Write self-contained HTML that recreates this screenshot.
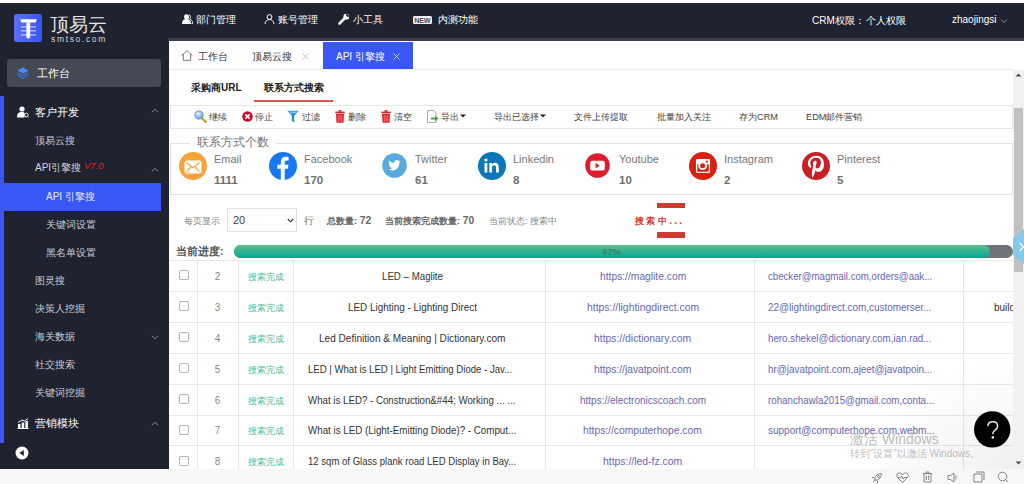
<!DOCTYPE html>
<html><head><meta charset="utf-8">
<style>
*{box-sizing:border-box;margin:0;padding:0}
html,body{width:1024px;height:484px;overflow:hidden;background:#f7f7f7;font-family:"Liberation Sans",sans-serif;}
.a{position:absolute;white-space:nowrap}
#topstrip{left:0;top:0;width:1024px;height:3px;background:#fff}
#header{left:0;top:3px;width:1024px;height:38px;background:#1f2330}
#sidebar{left:0;top:3px;width:169px;height:466px;background:#1f2330}
#band{left:168px;top:38px;width:856px;height:3px;background:#3a3e4a}
#content{left:169px;top:41px;width:855px;height:428px;background:#fff}
.hnav{color:#fff;font-size:10px;line-height:12px}
.side{color:#c9ccd4;font-size:10px;line-height:12px}
.sideh{color:#fff;font-size:11px;line-height:14px}
.hl{border-top:1px solid #e6e6e6}
.vl{border-left:1px solid #e6e6e6}
.tb{font-size:9.2px;color:#444;line-height:12px}
.soc{font-size:11px;color:#777;line-height:13px}
.socn{font-size:11.5px;color:#707070;font-weight:bold;line-height:13px}
.cell{font-size:10px;color:#333;line-height:12px;transform-origin:0 0}
.url{font-size:10px;color:#6a66b8;line-height:12px;transform-origin:0 0}
.ok{font-size:9.3px;color:#4cbb9c;line-height:12px}
.num{font-size:10px;color:#888;line-height:12px}
.cb{width:9.5px;height:9.5px;border:1px solid #b4b4b4;border-radius:2px;background:#fff}
</style></head><body>
<div id="topstrip" class="a"></div>
<div id="header" class="a"></div>
<div id="sidebar" class="a"></div>
<div id="band" class="a"></div>
<div id="content" class="a"></div>

<!-- logo -->
<div class="a" style="left:14px;top:14px;width:28px;height:28px;border-radius:3px;background:linear-gradient(90deg,#5b6ff5,#3a55f2)"></div>
<svg class="a" style="left:14px;top:14px" width="28" height="28" viewBox="0 0 28 28">
 <path d="M6.3 5.3 H22.7 L21.8 8.6 H7.2 Z" fill="#fff"/>
 <path d="M12.4 8.5 H16.2 V23.5 L14.3 24.8 L12.4 23.5Z" fill="#fff"/>
 <g fill="#fff" opacity="0.75"><rect x="7" y="12.3" width="15" height="1.1"/><rect x="7" y="16.3" width="15" height="1.1"/><rect x="7" y="20.4" width="15" height="1.1"/></g>
</svg>
<div class="a" style="left:50px;top:13.5px;color:#e4e4e6;font-size:18.7px;line-height:22px;font-weight:300">顶易云</div>
<div class="a" style="left:51px;top:34.5px;color:#d8d8dc;font-size:8.5px;line-height:9px;letter-spacing:1.65px">smtso.com</div>

<!-- header nav -->
<svg class="a" style="left:182px;top:14px" width="11" height="10" viewBox="0 0 11 10"><circle cx="4.5" cy="2.8" r="2.5" fill="#fff"/><path d="M0 10 C0 6 2 5 4.5 5 C7 5 9 6 9 10Z" fill="#fff"/><path d="M7 0.8 C8.8 1 9 4 7.5 5 C9.5 5.5 10.5 7 10.8 9.5 L9.5 9.5" fill="none" stroke="#fff" stroke-width="0.9"/></svg>
<div class="a hnav" style="left:196px;top:14px">部门管理</div>
<svg class="a" style="left:264px;top:14px" width="11" height="10" viewBox="0 0 11 10"><circle cx="5.5" cy="3" r="2.4" fill="none" stroke="#fff" stroke-width="1"/><path d="M1 10 C1.5 6.5 3.5 5.6 5.5 5.6 C7.5 5.6 9.5 6.5 10 10" fill="none" stroke="#fff" stroke-width="1"/></svg>
<div class="a hnav" style="left:278px;top:14px">账号管理</div>
<svg class="a" style="left:338px;top:13px" width="12" height="12" viewBox="0 0 12 12"><path d="M1.5 10.5 L6.5 5.5" stroke="#fff" stroke-width="2.6" stroke-linecap="round"/><circle cx="8.3" cy="3.7" r="2.9" fill="#fff"/><path d="M8.8 0.6 L11.4 3.2 L9.8 4.2 L7.8 2.2Z" fill="#1f2330"/></svg>
<div class="a hnav" style="left:353px;top:14px">小工具</div>
<div class="a" style="left:413px;top:16px;width:18.5px;height:8px;background:#f2f2f2;border-radius:1.5px;color:#4a4d58;font-size:7.2px;font-weight:bold;line-height:9px;text-align:center;letter-spacing:-0.3px">NEW</div>
<div class="a hnav" style="left:438px;top:14px">内测功能</div>
<div class="a hnav" style="left:812px;top:15px;font-size:10px">CRM权限：</div>
<div class="a hnav" style="left:866px;top:15px;font-size:10px">个人权限</div>
<div class="a hnav" style="left:952px;top:14px;font-size:10px">zhaojingsi</div>
<svg class="a" style="left:1000px;top:18px" width="8" height="6" viewBox="0 0 8 6"><path d="M1 1.5 L4 4.5 L7 1.5" fill="none" stroke="#9a9ca4" stroke-width="0.9"/></svg>

<!-- sidebar -->
<div class="a" style="left:7px;top:59px;width:154px;height:28px;background:#454954;border-radius:3px"></div>
<svg class="a" style="left:16.5px;top:66.5px" width="12" height="12" viewBox="0 0 12 12"><path d="M6 0.6 L11.6 3.5 L6 6.4 L0.4 3.5Z" fill="#4a8df8"/><path d="M0.6 5.8 L6 8.6 L11.4 5.8" fill="none" stroke="#3d72e6" stroke-width="1.1"/><path d="M0.6 8.3 L6 11.1 L11.4 8.3" fill="none" stroke="#3d72e6" stroke-width="1.1"/></svg>
<div class="a sideh" style="left:37px;top:66px;font-size:11px">工作台</div>
<div class="a" style="left:0;top:96px;width:4px;height:347px;background:#3a57f5"></div>
<svg class="a" style="left:17px;top:106px" width="12" height="12" viewBox="0 0 12 12"><circle cx="5" cy="3" r="2.6" fill="#fff"/><path d="M0 11.5 C0 7 2 6 5 6 C6.5 6 7.2 6.3 7.5 6.7 L7.5 11.5Z" fill="#fff"/><circle cx="9.3" cy="9" r="1.8" fill="none" stroke="#fff" stroke-width="0.9"/><path d="M10.5 10.3 L11.8 11.6" stroke="#fff" stroke-width="0.9"/></svg>
<div class="a sideh" style="left:35px;top:105px">客户开发</div>
<svg class="a" style="left:151px;top:108px" width="8" height="5" viewBox="0 0 8 5"><path d="M1 4.2 L4 1.2 L7 4.2" fill="none" stroke="#8a8d96" stroke-width="1"/></svg>
<div class="a side" style="left:35px;top:135px">顶易云搜</div>
<div class="a side" style="left:35px;top:162px;font-size:10px;color:#d5d7dd">API引擎搜</div>
<div class="a" style="left:84px;top:161px;color:#e0202a;font-size:9.5px;font-style:italic;line-height:10px">V7.0</div>
<svg class="a" style="left:151px;top:167px" width="8" height="5" viewBox="0 0 8 5"><path d="M1 4.2 L4 1.2 L7 4.2" fill="none" stroke="#8a8d96" stroke-width="1"/></svg>
<div class="a" style="left:4px;top:183px;width:157px;height:28px;background:#3a57f5"></div>
<div class="a side" style="left:46px;top:191px;color:#e6e9ff">API 引擎搜</div>
<div class="a side" style="left:46px;top:219px">关键词设置</div>
<div class="a side" style="left:46px;top:247px">黑名单设置</div>
<div class="a side" style="left:35px;top:275px">图灵搜</div>
<div class="a side" style="left:35px;top:303px">决策人挖掘</div>
<div class="a side" style="left:35px;top:331px">海关数据</div>
<svg class="a" style="left:151px;top:335px" width="8" height="5" viewBox="0 0 8 5"><path d="M1 0.8 L4 3.8 L7 0.8" fill="none" stroke="#8a8d96" stroke-width="1"/></svg>
<div class="a side" style="left:35px;top:359px">社交搜索</div>
<div class="a side" style="left:35px;top:387px">关键词挖掘</div>
<svg class="a" style="left:17px;top:418px" width="12" height="11" viewBox="0 0 12 11"><path d="M0.5 10.5 H11.5" stroke="#fff" stroke-width="1"/><rect x="1" y="6" width="2.5" height="4.5" fill="#fff"/><rect x="4.7" y="4.5" width="2.5" height="6" fill="#fff"/><rect x="8.4" y="3" width="2.5" height="7.5" fill="#fff"/><path d="M1 4.5 L5 2 L7.5 3 L11 0.5" fill="none" stroke="#fff" stroke-width="1"/></svg>
<div class="a sideh" style="left:35px;top:416px">营销模块</div>
<svg class="a" style="left:151px;top:421px" width="8" height="5" viewBox="0 0 8 5"><path d="M1 4.2 L4 1.2 L7 4.2" fill="none" stroke="#8a8d96" stroke-width="1"/></svg>
<svg class="a" style="left:15px;top:446px" width="14" height="14" viewBox="0 0 14 14"><circle cx="7" cy="7" r="6.5" fill="#fff"/><path d="M4.3 7 L8.8 4 L8.8 10Z" fill="#1f2330"/></svg>


<!-- tabs -->
<svg class="a" style="left:180.5px;top:49.5px" width="12" height="11" viewBox="0 0 12 11"><path d="M0.6 5.6 L6 0.6 L11.4 5.6 M2.3 4.2 V10.3 H9.7 V4.2" fill="none" stroke="#555" stroke-width="0.8"/></svg>
<div class="a" style="left:198px;top:50.5px;font-size:10px;color:#333;line-height:12px">工作台</div>
<div class="a" style="left:252px;top:50.5px;font-size:10px;color:#333;line-height:12px">顶易云搜</div>
<svg class="a" style="left:302px;top:53px" width="7" height="7" viewBox="0 0 7 7"><path d="M0.5 0.5 L6.5 6.5 M6.5 0.5 L0.5 6.5" stroke="#b5b5b5" stroke-width="0.8"/></svg>
<div class="a" style="left:323px;top:42px;width:90px;height:27px;background:#3a57f5"></div>
<div class="a" style="left:336px;top:50.5px;font-size:10px;color:#fff;line-height:12px">API 引擎搜</div>
<svg class="a" style="left:393px;top:53px" width="7" height="7" viewBox="0 0 7 7"><path d="M0.5 0.5 L6.5 6.5 M6.5 0.5 L0.5 6.5" stroke="#dfe4ff" stroke-width="0.8"/></svg>
<div class="a hl" style="left:169px;top:69px;width:844px;height:1px;border-color:#ececec"></div>
<!-- scrollbar -->
<div class="a" style="left:1013px;top:70px;width:11px;height:399px;background:#f1f1f1"></div>
<div class="a" style="left:1014px;top:108px;width:9px;height:164px;background:#c1c1c1"></div>
<svg class="a" style="left:1014px;top:72px" width="9" height="6" viewBox="0 0 9 6"><path d="M1.5 4.5 L4.5 1.5 L7.5 4.5Z" fill="#505050"/></svg>
<svg class="a" style="left:1014px;top:460px" width="9" height="6" viewBox="0 0 9 6"><path d="M1.5 1.5 L4.5 4.5 L7.5 1.5Z" fill="#505050"/></svg>
<!-- subtabs -->
<div class="a" style="left:191px;top:81px;font-size:10px;color:#222;font-weight:bold;line-height:13px">采购商URL</div>
<div class="a" style="left:264px;top:81px;font-size:10px;color:#222;font-weight:bold;line-height:13px">联系方式搜索</div>
<div class="a" style="left:254px;top:100px;width:79px;height:1.5px;background:#e0534f"></div>
<div class="a hl" style="left:169px;top:105px;width:844px;height:1px"></div>
<!-- toolbar -->
<div class="a" style="left:170px;top:105px;width:843px;height:24px;border:1px solid #e6e6e6;border-left-color:#e6e6e6"></div>

<!-- toolbar items -->
<svg class="a" style="left:194px;top:110px" width="13" height="13" viewBox="0 0 13 13"><defs><radialGradient id="mg" cx="0.4" cy="0.35" r="0.6"><stop offset="0" stop-color="#e8f6ff"/><stop offset="1" stop-color="#58a8e8"/></radialGradient></defs><path d="M7.8 8 L11.8 12" stroke="#d89a2a" stroke-width="2.4" stroke-linecap="round"/><circle cx="5" cy="5" r="4.1" fill="url(#mg)" stroke="#8a9aa8" stroke-width="1"/></svg>
<div class="a tb" style="top:111px;left:209px">继续</div>
<svg class="a" style="left:242px;top:111px" width="11" height="11" viewBox="0 0 11 11"><circle cx="5.5" cy="5.5" r="5.3" fill="#c4122b"/><path d="M3.4 3.4 L7.6 7.6 M7.6 3.4 L3.4 7.6" stroke="#fff" stroke-width="1.6"/></svg>
<div class="a tb" style="top:111px;left:255px">停止</div>
<svg class="a" style="left:287px;top:110px" width="12" height="13" viewBox="0 0 12 13"><path d="M0.3 0.8 H11.7 L7.2 5.8 V12.5 L4.8 10.8 V5.8Z" fill="#1b8fd6"/><path d="M1.5 1.5 H10.5 L8 3.5 H4Z" fill="#7cc6f2"/></svg>
<div class="a tb" style="top:111px;left:302px">过滤</div>
<svg class="a" style="left:335px;top:110px" width="10" height="13" viewBox="0 0 10 13"><rect x="0.3" y="1.6" width="9.4" height="1.8" fill="#e0242c"/><rect x="3.5" y="0.2" width="3" height="1.6" fill="#e0242c"/><path d="M1 4 H9 L8.5 12.8 H1.5Z" fill="#e0242c"/><path d="M3.3 5.2 V11.5 M5 5.2 V11.5 M6.7 5.2 V11.5" stroke="#ff9a9a" stroke-width="0.6"/></svg>
<div class="a tb" style="top:111px;left:348px">删除</div>
<svg class="a" style="left:381px;top:110px" width="10" height="13" viewBox="0 0 10 13"><rect x="0.3" y="1.6" width="9.4" height="1.8" fill="#e0242c"/><rect x="3.5" y="0.2" width="3" height="1.6" fill="#e0242c"/><path d="M1 4 H9 L8.5 12.8 H1.5Z" fill="#e0242c"/><path d="M3.3 5.2 V11.5 M5 5.2 V11.5 M6.7 5.2 V11.5" stroke="#ff9a9a" stroke-width="0.6"/></svg>
<div class="a tb" style="top:111px;left:394px">清空</div>
<svg class="a" style="left:427px;top:110px" width="12" height="13" viewBox="0 0 12 13"><path d="M0.5 0.5 H6.5 L9 3 V12.5 H0.5Z" fill="#fff" stroke="#999" stroke-width="0.8"/><path d="M4 7.5 H8 V5.5 L11.5 8.5 L8 11.5 V9.5 H4Z" fill="#3cab3c"/></svg>
<div class="a tb" style="top:111px;left:441px">导出</div>
<svg class="a" style="left:460px;top:114px" width="6" height="4" viewBox="0 0 6 4"><path d="M0 0.5 H6 L3 3.5Z" fill="#222"/></svg>
<div class="a tb" style="top:111px;left:494px">导出已选择</div>
<svg class="a" style="left:540px;top:114px" width="6" height="4" viewBox="0 0 6 4"><path d="M0 0.5 H6 L3 3.5Z" fill="#222"/></svg>
<div class="a tb" style="top:111px;left:574px">文件上传提取</div>
<div class="a tb" style="top:111px;left:656.5px">批量加入关注</div>
<div class="a tb" style="top:111px;left:739px">存为CRM</div>
<div class="a tb" style="top:111px;left:806px">EDM邮件营销</div>

<!-- fieldset -->
<div class="a" style="left:170px;top:143px;width:843px;height:52px;border:1px solid #e2e2e2;border-top:none"></div>
<div class="a" style="left:170px;top:143px;width:20px;height:1px;background:#e2e2e2"></div>
<div class="a" style="left:276px;top:143px;width:737px;height:1px;background:#e2e2e2"></div>
<div class="a" style="left:197px;top:135px;font-size:12px;color:#777;line-height:14px">联系方式个数</div>

<!-- social -->
<svg class="a" style="left:179px;top:152px" width="28" height="28" viewBox="0 0 28 28"><circle cx="14" cy="14" r="14" fill="#f7a23a"/><rect x="5.5" y="8.5" width="17" height="13" rx="2.5" fill="#fff"/><path d="M7.5 10.5 L14 15.8 L20.5 10.5 M7.5 19.5 L11.8 15 M20.5 19.5 L16.2 15" fill="none" stroke="#f7a23a" stroke-width="1.1"/><circle cx="8.5" cy="20.5" r="2.3" fill="#fbd9a8"/></svg>
<div class="a soc" style="left:214px;top:153px">Email</div>
<div class="a socn" style="left:214px;top:174px">1111</div>
<svg class="a" style="left:269px;top:152px" width="28" height="28" viewBox="0 0 28 28"><circle cx="14" cy="14" r="14" fill="#1877f2"/><path transform="translate(-0.7 0)" d="M12.5 28 V16.8 H9 V12.8 H12.5 V10 C12.5 6.6 14.5 4.8 17.6 4.8 C19 4.8 20.3 5 20.3 5 V8.4 H18.6 C16.9 8.4 16.4 9.4 16.4 10.5 V12.8 H20.2 L19.6 16.8 H16.4 V28Z" fill="#fff"/></svg>
<div class="a soc" style="left:304px;top:153px">Facebook</div>
<div class="a socn" style="left:304px;top:174px">170</div>
<svg class="a" style="left:382px;top:153px" width="25" height="25" viewBox="0 0 25 25"><circle cx="12.5" cy="12.5" r="12.3" fill="#5aaae0"/><path d="M18.5 8.3 C18 8.5 17.5 8.7 17 8.7 C17.5 8.4 17.9 7.9 18.1 7.3 C17.6 7.6 17.1 7.8 16.5 7.9 C15.5 6.8 13.8 6.8 12.8 7.9 C12.2 8.5 12 9.4 12.2 10.2 C10.2 10.1 8.3 9.1 7 7.6 C6.4 8.8 6.7 10.2 7.8 11 C7.4 11 7 10.9 6.7 10.7 C6.7 12 7.6 13 8.8 13.3 C8.4 13.4 8 13.4 7.6 13.3 C8 14.4 9 15.1 10.1 15.2 C9.1 16 7.8 16.4 6.5 16.3 C7.7 17 9 17.4 10.4 17.4 C14.9 17.4 17.5 13.7 17.3 9.8 C17.8 9.3 18.2 8.8 18.5 8.3Z" fill="#fff"/></svg>
<div class="a soc" style="left:415px;top:153px">Twitter</div>
<div class="a socn" style="left:415px;top:174px">61</div>
<svg class="a" style="left:478px;top:152px" width="28" height="28" viewBox="0 0 28 28"><circle cx="14" cy="14" r="14" fill="#0b77b7"/><rect x="6.5" y="11" width="2.8" height="9.5" fill="#fff"/><circle cx="7.9" cy="8" r="1.6" fill="#fff"/><path d="M11.3 11 H14 V12.4 C14.6 11.4 15.6 10.8 17 10.8 C19.3 10.8 20.8 12.1 20.8 15 V20.5 H18 V15.5 C18 14 17.4 13.3 16.3 13.3 C15 13.3 14.1 14.1 14.1 15.6 V20.5 H11.3Z" fill="#fff"/></svg>
<div class="a soc" style="left:513px;top:153px">Linkedin</div>
<div class="a socn" style="left:513px;top:174px">8</div>
<svg class="a" style="left:585px;top:153px" width="25" height="25" viewBox="0 0 25 25"><circle cx="12.5" cy="12.5" r="12.3" fill="#e01b2e"/><rect x="5.2" y="7.8" width="14.6" height="9.8" rx="2.2" fill="#fff"/><path d="M10.6 9.8 L14.6 12.7 L10.6 15.6Z" fill="#e01b2e"/></svg>
<div class="a soc" style="left:619px;top:153px">Youtube</div>
<div class="a socn" style="left:619px;top:174px">10</div>
<svg class="a" style="left:689px;top:152px" width="28" height="28" viewBox="0 0 28 28"><circle cx="14" cy="14" r="14" fill="#d9210f"/><rect x="7.6" y="7.6" width="12.8" height="12.8" rx="0.8" fill="none" stroke="#fff" stroke-width="1.3"/><path d="M7.6 7.6 H20.4 V12.3 H7.6Z" fill="#fff"/><circle cx="13.6" cy="13.7" r="4.4" fill="#fff"/><circle cx="13.6" cy="13.7" r="2.5" fill="#d9210f"/><circle cx="17.9" cy="9.6" r="1.1" fill="#d9210f"/></svg>
<div class="a soc" style="left:724px;top:153px">Instagram</div>
<div class="a socn" style="left:724px;top:174px">2</div>
<svg class="a" style="left:802px;top:152px" width="28" height="28" viewBox="0 0 28 28"><circle cx="14" cy="14" r="14" fill="#cb1f27"/><path transform="translate(14 11) scale(1.15) translate(-14 -11)" d="M14.5 4.8 C9.5 4.8 7 8.3 7 11.3 C7 13.1 7.7 14.6 9.1 15.2 C9.3 15.3 9.6 15.2 9.6 15 L9.9 14 C10 13.8 9.9 13.6 9.7 13.4 C9.3 12.9 9 12.2 9 11.3 C9 8.7 10.9 6.5 14 6.5 C16.7 6.5 18.3 8.2 18.3 10.4 C18.3 13.3 17 15.7 15.2 15.7 C14.2 15.7 13.4 14.9 13.7 13.8 C14 12.6 14.6 11.3 14.6 10.4 C14.6 9.6 14.2 9 13.3 9 C12.2 9 11.4 10.1 11.4 11.6 C11.4 12.5 11.7 13.2 11.7 13.2 L10.6 18 C10.3 19.4 10.5 21.3 10.6 23.3 L11.1 23.5 C11.8 22.4 12.5 21 12.8 19.8 L13.4 17.5 C13.8 18.2 14.8 18.7 15.8 18.7 C18.9 18.7 21 15.9 21 12.2 C21 7.6 18.2 4.8 14.5 4.8Z" fill="#fff"/></svg>
<div class="a soc" style="left:837px;top:153px">Pinterest</div>
<div class="a socn" style="left:837px;top:174px">5</div>

<!-- pagination -->
<div class="a" style="left:184px;top:215px;font-size:9.2px;color:#888;line-height:12px">每页显示</div>
<div class="a" style="left:227px;top:208px;width:70px;height:24px;border:1px solid #e2e2e2;background:#fff"></div>
<div class="a" style="left:233px;top:214px;font-size:11px;color:#444;line-height:12px">20</div>
<svg class="a" style="left:287px;top:218px" width="7" height="5" viewBox="0 0 7 5"><path d="M0.8 1 L3.5 3.8 L6.2 1" fill="none" stroke="#333" stroke-width="1.1"/></svg>
<div class="a" style="left:304px;top:215px;font-size:9.5px;color:#777;line-height:12px">行</div>
<div class="a" style="left:327px;top:215px;font-size:9.3px;color:#666;font-weight:bold;line-height:12px">总数量: <span style="font-size:10.3px">72</span></div>
<div class="a" style="left:385px;top:215px;font-size:9.3px;color:#666;font-weight:bold;line-height:12px">当前搜索完成数量: <span style="font-size:10.3px">70</span></div>
<div class="a" style="left:489px;top:215px;font-size:9.2px;color:#888;line-height:12px">当前状态: 搜索中</div>
<div class="a" style="left:656.5px;top:202.5px;width:28.5px;height:5.3px;background:#cc3c31"></div>
<div class="a" style="left:656.5px;top:232px;width:28.5px;height:5.5px;background:#cc3c31"></div>
<div class="a" style="left:635px;top:215px;font-size:8.8px;color:#cc3c31;font-weight:bold;line-height:12px;letter-spacing:2.4px">搜索中<span style="font-size:10px;letter-spacing:2.2px">...</span></div>
<!-- table -->
<div class="a" style="left:169px;top:260px;width:844px;height:1px;background:#e8e8e8"></div>
<div class="a" style="left:169px;top:291px;width:844px;height:1px;background:#e8e8e8"></div>
<div class="a" style="left:169px;top:322px;width:844px;height:1px;background:#e8e8e8"></div>
<div class="a" style="left:169px;top:353px;width:844px;height:1px;background:#e8e8e8"></div>
<div class="a" style="left:169px;top:384px;width:844px;height:1px;background:#e8e8e8"></div>
<div class="a" style="left:169px;top:415px;width:844px;height:1px;background:#e8e8e8"></div>
<div class="a" style="left:169px;top:445px;width:844px;height:1px;background:#e8e8e8"></div>
<div class="a" style="left:197px;top:260px;width:1px;height:209px;background:#e8e8e8"></div>
<div class="a" style="left:238px;top:260px;width:1px;height:209px;background:#e8e8e8"></div>
<div class="a" style="left:293px;top:260px;width:1px;height:209px;background:#e8e8e8"></div>
<div class="a" style="left:545px;top:260px;width:1px;height:209px;background:#e8e8e8"></div>
<div class="a" style="left:754px;top:260px;width:1px;height:209px;background:#e8e8e8"></div>
<div class="a" style="left:963px;top:260px;width:1px;height:209px;background:#e8e8e8"></div>
<div class="a cb" style="left:179px;top:270px"></div>
<div class="a num" style="left:197px;width:41px;text-align:center;top:271.0px">2</div>
<div class="a ok" style="left:248px;top:271.0px">搜索完成</div>
<div class="a cell" style="left:381.8px;top:271.0px;transform:scaleX(0.970)">LED – Maglite</div>
<div class="a url" style="left:599.6px;top:271.0px;transform:scaleX(1.027)">https://maglite.com</div>
<div class="a url" style="left:768.4px;top:271.0px;transform:scaleX(0.964)">cbecker@magmail.com,orders@aak...</div>
<div class="a cb" style="left:179px;top:301px"></div>
<div class="a num" style="left:197px;width:41px;text-align:center;top:301.9px">3</div>
<div class="a ok" style="left:248px;top:301.9px">搜索完成</div>
<div class="a cell" style="left:347.8px;top:301.9px;transform:scaleX(0.991)">LED Lighting - Lighting Direct</div>
<div class="a url" style="left:586.6px;top:301.9px;transform:scaleX(1.041)">https://lightingdirect.com</div>
<div class="a url" style="left:768.4px;top:301.9px;transform:scaleX(0.992)">22@lightingdirect.com,customerser...</div>
<div class="a cb" style="left:179px;top:332px"></div>
<div class="a num" style="left:197px;width:41px;text-align:center;top:332.7px">4</div>
<div class="a ok" style="left:248px;top:332.7px">搜索完成</div>
<div class="a cell" style="left:319.1px;top:332.7px;transform:scaleX(1.006)">Led Definition &amp; Meaning | Dictionary.com</div>
<div class="a url" style="left:594.3px;top:332.7px;transform:scaleX(1.036)">https://dictionary.com</div>
<div class="a url" style="left:768.4px;top:332.7px;transform:scaleX(0.977)">hero.shekel@dictionary.com,ian.rad...</div>
<div class="a cb" style="left:179px;top:363px"></div>
<div class="a num" style="left:197px;width:41px;text-align:center;top:363.6px">5</div>
<div class="a ok" style="left:248px;top:363.6px">搜索完成</div>
<div class="a cell" style="left:308.2px;top:363.6px;transform:scaleX(0.959)">LED | What is LED | Light Emitting Diode - Jav...</div>
<div class="a url" style="left:594.2px;top:363.6px;transform:scaleX(1.029)">https://javatpoint.com</div>
<div class="a url" style="left:768.1px;top:363.6px;transform:scaleX(0.987)">hr@javatpoint.com,ajeet@javatpoin...</div>
<div class="a cb" style="left:179px;top:394px"></div>
<div class="a num" style="left:197px;width:41px;text-align:center;top:394.5px">6</div>
<div class="a ok" style="left:248px;top:394.5px">搜索完成</div>
<div class="a cell" style="left:308.2px;top:394.5px;transform:scaleX(0.970)">What is LED? - Construction&amp;#44; Working ... ...</div>
<div class="a url" style="left:580.0px;top:394.5px;transform:scaleX(0.999)">https://electronicscoach.com</div>
<div class="a url" style="left:768.1px;top:394.5px;transform:scaleX(0.976)">rohanchawla2015@gmail.com,conta...</div>
<div class="a cb" style="left:179px;top:425px"></div>
<div class="a num" style="left:197px;width:41px;text-align:center;top:425.4px">7</div>
<div class="a ok" style="left:248px;top:425.4px">搜索完成</div>
<div class="a cell" style="left:308.2px;top:425.4px;transform:scaleX(0.978)">What is LED (Light-Emitting Diode)? - Comput...</div>
<div class="a url" style="left:583.4px;top:425.4px;transform:scaleX(1.027)">https://computerhope.com</div>
<div class="a url" style="left:768.1px;top:425.4px;transform:scaleX(0.999)">support@computerhope.com,webm...</div>
<div class="a cb" style="left:179px;top:456px"></div>
<div class="a num" style="left:197px;width:41px;text-align:center;top:456.2px">8</div>
<div class="a ok" style="left:248px;top:456.2px">搜索完成</div>
<div class="a cell" style="left:308.2px;top:456.2px;transform:scaleX(0.956)">12 sqm of Glass plank road LED Display in Bay...</div>
<div class="a url" style="left:603.2px;top:456.2px;transform:scaleX(1.040)">https://led-fz.com</div>
<div class="a cell" style="left:994px;top:302.3px;overflow:hidden;width:19px">build</div>
<!-- progress -->
<div class="a" style="left:176px;top:245px;font-size:10.5px;color:#505050;font-weight:bold;line-height:13px">当前进度:</div>
<div class="a" style="left:234px;top:244.5px;width:779px;height:13.8px;border-radius:7px;background:#707379"></div>
<div class="a" style="left:234px;top:244.5px;width:756px;height:13.8px;border-radius:7px;background:linear-gradient(180deg,#5cbe8c,#04a896)"></div>
<div class="a" style="left:602px;top:246px;font-size:9.5px;color:#3f7f6c;font-weight:bold;line-height:12px">97%</div>
<svg class="a" style="left:1013px;top:229px" width="11" height="36" viewBox="0 0 11 36"><path d="M11 0 L0 9.5 V26 L11 35.5Z" fill="#82c9ec"/><path d="M6.5 14 L10.5 18 L6.5 22" fill="none" stroke="#fff" stroke-width="1.2"/></svg>

<!-- overlays -->
<div class="a" style="left:860px;top:360px;width:153px;height:109px;background:radial-gradient(ellipse 150px 110px at 100% 100%, rgba(0,0,0,0.06), rgba(0,0,0,0) 100%)"></div>
<div class="a" style="left:850px;top:430.7px;font-size:14px;color:rgba(120,120,120,0.5);line-height:16px">激活 Windows</div>
<div class="a" style="left:850px;top:447.7px;font-size:10px;color:rgba(120,120,120,0.5);line-height:11px">转到“设置”以激活 Windows。</div>

<svg class="a" style="left:974px;top:411px" width="37" height="37" viewBox="0 0 37 37"><circle cx="18.2" cy="18.4" r="18.2" fill="#000"/><path d="M13.9 15.3 C13.9 12.3 16.1 10.7 18.8 10.7 C21.7 10.7 23.6 12.5 23.6 15.1 C23.6 17.4 22.1 18.5 20.6 19.6 C19.4 20.5 18.8 21.3 18.8 23.2" fill="none" stroke="#e2e2e2" stroke-width="1.5"/><circle cx="18.8" cy="26.4" r="1.3" fill="#e2e2e2"/></svg>
<!-- bottom icons -->
<svg class="a" style="left:871px;top:472px" width="12" height="12" viewBox="0 0 12 12"><path d="M4 8 C3 6 5 2 10.5 1.5 C10 7 6 9 4 8Z M4.5 7.5 L2 10 M3 5.5 L1 5.5 M6.5 9 L6.5 11" fill="none" stroke="#777" stroke-width="0.9"/><circle cx="7.5" cy="4.5" r="1" fill="none" stroke="#777" stroke-width="0.8"/></svg>
<svg class="a" style="left:896px;top:472px" width="13" height="11" viewBox="0 0 13 11"><path d="M6.5 10.5 L1.5 5.5 C0 4 0.5 1 3.5 1 C5 1 6 2 6.5 3 C7 2 8 1 9.5 1 C12.5 1 13 4 11.5 5.5Z M2 5.5 H4.5 L5.5 4 L7 7 L8 5.5 H11" fill="none" stroke="#777" stroke-width="0.9"/></svg>
<svg class="a" style="left:922px;top:471px" width="11" height="12" viewBox="0 0 11 12"><path d="M1 2.5 H10 M4 2.5 V1 H7 V2.5 M2 2.5 V11 H9 V2.5 M4.3 4.5 V9 M6.7 4.5 V9" fill="none" stroke="#777" stroke-width="0.9"/></svg>
<svg class="a" style="left:947px;top:472px" width="12" height="11" viewBox="0 0 12 11"><path d="M1 3.5 H3.5 L7 1 V10 L3.5 7.5 H1Z M9 3.5 L9 7.5" fill="none" stroke="#777" stroke-width="0.9"/></svg>
<svg class="a" style="left:973px;top:471px" width="12" height="12" viewBox="0 0 12 12"><path d="M3 1 H11 V9 M1 3 H9 V11 H1Z" fill="none" stroke="#777" stroke-width="0.9"/></svg>
<svg class="a" style="left:997px;top:471px" width="12" height="12" viewBox="0 0 12 12"><circle cx="5.5" cy="5.5" r="4.3" fill="none" stroke="#777" stroke-width="0.9"/><path d="M8.5 8.5 L11 11" stroke="#777" stroke-width="0.9"/></svg>
</body></html>
